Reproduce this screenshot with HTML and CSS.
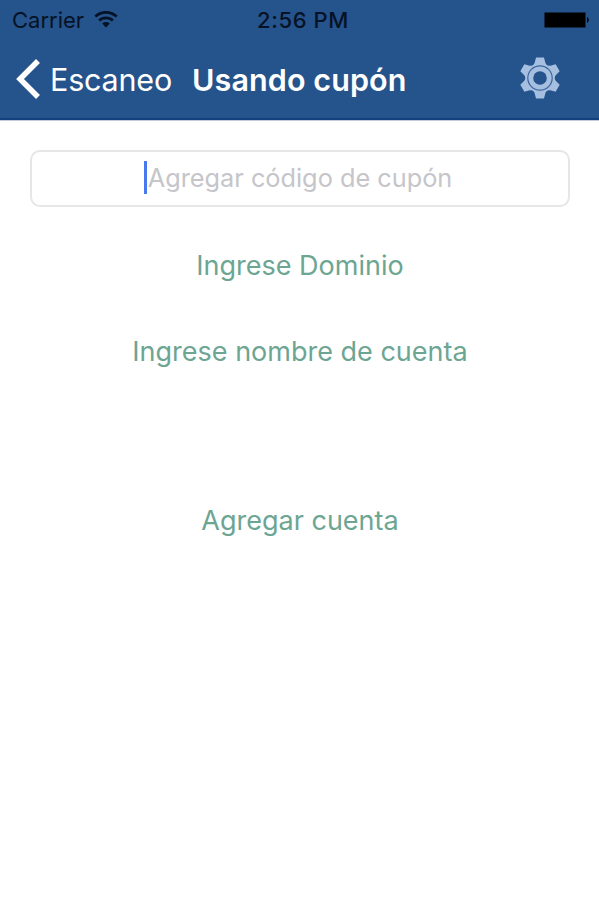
FILE: index.html
```html
<!DOCTYPE html>
<html lang="es">
  <head>
    <meta charset="UTF-8" />
    <meta name="viewport" content="width=device-width, initial-scale=1.0" />
    <title>Usando cupón</title>
    <link rel="stylesheet" href="styles.css">
  </head>
  <body>
    <header class="header">
      <div class="status-bar">
        <div class="carrier">
          <span class="carrier-name">Carrier</span>
          <svg class="wifi" viewBox="0 0 24 17" width="24" height="17">
            <path d="M1.3 5.6a15.5 15.5 0 0 1 21.4 0" />
            <path d="M5.1 9.6a10 10 0 0 1 13.8 0" />
            <path class="wifi-dot" d="M8.2 12.6a5.6 5.6 0 0 1 7.6 0L12 16.6z" />
          </svg>
        </div>
        <span class="time">2:56 PM</span>
        <svg class="battery" viewBox="0 0 46 16" width="46" height="16">
          <rect x="0.5" y="0.5" width="41" height="15" />
          <path d="M43 4.8q3.6 3.2 0 6.4z" />
        </svg>
      </div>
      <nav class="nav-bar">
        <a class="back">
          <svg class="chevron" viewBox="0 0 25 40" width="25" height="40">
            <path d="M22 2L4 20l18 18" />
          </svg>
          <span class="back-text">Escaneo</span>
        </a>
        <h1 class="title">Usando cupón</h1>
        <svg class="gear" viewBox="-20 -21 40 42" width="40" height="42">
          <g id="teeth">
            <path id="tooth" d="M-8-11L-5.4-15l1.4-5.4h8L5.4-15 8-11z" />
            <use href="#tooth" transform="rotate(60)" />
            <use href="#tooth" transform="rotate(120)" />
            <use href="#tooth" transform="rotate(180)" />
            <use href="#tooth" transform="rotate(240)" />
            <use href="#tooth" transform="rotate(300)" />
          </g>
          <circle class="gear-body" r="14.6" />
          <circle class="gear-groove" r="12.2" />
          <circle class="gear-hole" r="6.8" />
        </svg>
      </nav>
    </header>

    <main class="form">
      <div class="code-input">
        <span class="cursor"></span>
        <span class="placeholder">Agregar código de cupón</span>
      </div>
      <div class="link domain">Ingrese Dominio</div>
      <div class="link account">Ingrese nombre de cuenta</div>
      <div class="link add">Agregar cuenta</div>
    </main>
  </body>
</html>
```

FILE: styles.css
```css
* {
  box-sizing: border-box;
}
body {
  font-family: Inter, "Liberation Sans", sans-serif;
  background-color: #ffffff;
  margin: 0;
  padding: 0;
}
.header {
  height: 120px;
  background-color: #25538b;
  border-bottom: 2px solid #124180;
  box-shadow: 0 1px 0 #c3cbdc;
}
.status-bar {
  display: grid;
  grid-template-columns: 1fr auto 1fr;
  align-items: center;
  height: 40px;
  padding: 0 9px 0 12px;
  color: #061226;
  font-size: 22px;
}
.carrier {
  display: flex;
  align-items: center;
  gap: 10px;
}
.wifi {
  margin-top: -2px;
  fill: none;
  stroke: #061226;
  stroke-width: 2.7;
}
.wifi .wifi-dot {
  fill: #061226;
  stroke: none;
}
.time {
  padding-left: 4px;
  font-weight: 500;
  letter-spacing: 0.6px;
}
.battery {
  justify-self: end;
  fill: #000000;
}
.nav-bar {
  display: flex;
  align-items: center;
  height: 78px;
  padding: 0 39px 0 16px;
  color: #ffffff;
}
.back {
  display: flex;
  align-items: center;
  gap: 9px;
}
.chevron {
  fill: none;
  stroke: #ffffff;
  stroke-width: 5.5;
}
.back-text {
  font-size: 30.5px;
  letter-spacing: -0.2px;
}
.title {
  margin: 0 0 0 20px;
  font-size: 30.5px;
  font-weight: 600;
  letter-spacing: 0.1px;
}
.gear {
  margin-left: auto;
  margin-top: -3px;
  fill: #a6bfe0;
}
.gear-groove {
  fill: none;
  stroke: #3d659b;
  stroke-width: 1.2;
}
.gear-hole {
  fill: #25538b;
}
.form {
  display: flex;
  flex-direction: column;
  padding: 30px 29px 0 30px;
}
.code-input {
  display: flex;
  align-items: center;
  justify-content: center;
  height: 57px;
  padding-bottom: 2px;
  border: 2px solid #e6e6e8;
  border-radius: 10px;
}
.cursor {
  width: 3px;
  height: 33px;
  margin-left: -4px;
  margin-right: 1px;
  background-color: #4a78ee;
}
.placeholder {
  color: #c5c5ca;
  font-size: 25.3px;
}
.link {
  height: 34px;
  color: #6da593;
  font-size: 27px;
  line-height: 34px;
  text-align: center;
}
.domain {
  margin-top: 42px;
}
.account {
  margin-top: 52px;
}
.add {
  margin-top: 135px;
}
```
